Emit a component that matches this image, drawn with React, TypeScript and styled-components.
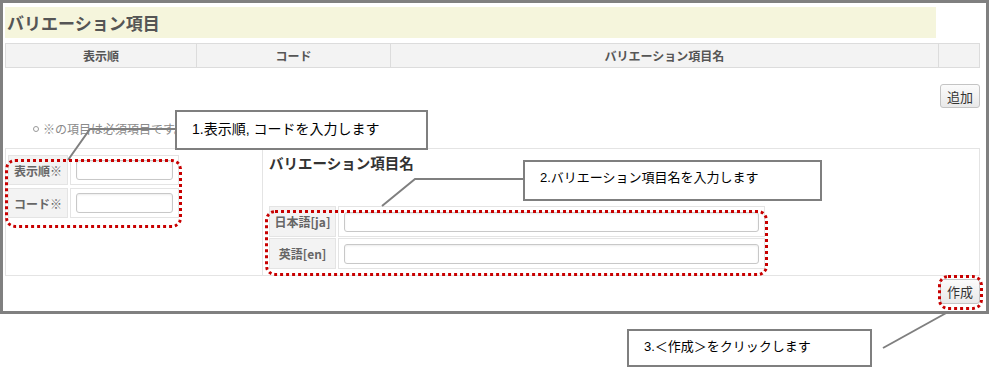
import styled, { createGlobalStyle } from 'styled-components';

const GlobalStyle = createGlobalStyle`
    html, body {
        margin: 0;
        padding: 0;
        background: #fff;
    }
    body {
        font-family: "Noto Sans CJK JP", "Noto Sans", sans-serif;
    }
`;

// 画面全体（注釈はこの上に重ねる）
const Page = styled.div`
    position: relative;
    width: 991px;
    height: 367px;
    overflow: hidden;
`;

const Frame = styled.div`
    width: 989px;
    height: 314px;
    border: 3px solid #808080;
    box-sizing: border-box;
    padding: 4px 6px 0 2px;
    display: flex;
    flex-direction: column;
`;

const TitleBar = styled.div`
    height: 31px;
    margin-right: 44px;
    background: #f5f5dc;
    padding-left: 2px;
    font-size: 17px;
    font-weight: bold;
    line-height: 31px;
    color: #555;
`;

const HeaderRow = styled.div`
    margin-top: 5px;
    display: grid;
    grid-template-columns: 191px 194px 548px 42px;
    height: 25px;
    border-top: 1px solid #dcdcdc;
    border-bottom: 1px solid #dcdcdc;
    box-sizing: border-box;
    background: #f3f3f3;
`;

const HeaderCell = styled.div`
    display: flex;
    align-items: center;
    justify-content: center;
    font-size: 12px;
    font-weight: bold;
    color: #555;
    border-left: 1px solid #dcdcdc;
    &:last-child {
        border-right: 1px solid #dcdcdc;
    }
`;

const ButtonRow = styled.div<{ $top: number }>`
    display: flex;
    justify-content: flex-end;
    margin-top: ${({ $top }) => $top}px;
`;

const Button = styled.button<{ $h: number }>`
    width: 40px;
    height: ${({ $h }) => $h}px;
    padding: 0;
    border: 1px solid #c4c4c4;
    border-radius: 3px;
    background: linear-gradient(#fbfbfb, #e9e9e9);
    font-family: inherit;
    font-size: 13px;
    color: #333;
`;

const Note = styled.div`
    margin-top: 11px;
    height: 20px;
    line-height: 20px;
    padding-left: 38px;
    position: relative;
    font-size: 12px;
    color: #8a8a8a;
    &::before {
        content: '';
        position: absolute;
        left: 28px;
        top: 7px;
        width: 4px;
        height: 4px;
        border: 1px solid #999;
        border-radius: 50%;
    }
`;

const FormPanel = styled.div`
    margin-top: 9px;
    height: 128px;
    box-sizing: border-box;
    border: 1px solid #e4e4e4;
    display: grid;
    grid-template-columns: 256px 1fr;
`;

const LeftPane = styled.div`
    padding: 6px 0 0 2px;
`;

const RightPane = styled.div`
    border-left: 1px solid #e4e4e4;
    padding: 4px 0 0 6px;
`;

const PaneTitle = styled.div`
    font-size: 14.5px;
    font-weight: bold;
    line-height: 20px;
    color: #333;
    margin-bottom: 33px;
`;

const FieldTable = styled.div<{ $label: number; $input: number; $row: number; $gap: number }>`
    display: grid;
    grid-template-columns: ${({ $label, $input }) => `${$label}px ${$input}px`};
    grid-auto-rows: ${({ $row }) => $row}px;
    column-gap: 2px;
    row-gap: ${({ $gap }) => $gap}px;
`;

const LabelCell = styled.div`
    display: flex;
    align-items: center;
    justify-content: center;
    background: #f3f3f3;
    border: 1px solid #e4e4e4;
    font-size: 12px;
    font-weight: bold;
    color: #666;
`;

const InputCell = styled.div`
    display: flex;
    align-items: center;
    border: 1px solid #e4e4e4;
    padding: 0 5px;
`;

const TextInput = styled.input`
    width: 100%;
    height: 20px;
    box-sizing: border-box;
    border: 1px solid #c8c8c8;
    border-radius: 3px;
    box-shadow: inset 0 1px 2px rgba(0, 0, 0, 0.08);
    outline: none;
`;

// 注釈
const Overlay = styled.svg`
    position: absolute;
    left: 0;
    top: 0;
    pointer-events: none;
`;

const Marker = styled.div<{ $x: number; $y: number; $w: number; $h: number }>`
    position: absolute;
    left: ${({ $x }) => $x}px;
    top: ${({ $y }) => $y}px;
    width: ${({ $w }) => $w}px;
    height: ${({ $h }) => $h}px;
    box-sizing: border-box;
    border: 3px dotted #c80000;
    border-radius: 10px;
    pointer-events: none;
`;

const Callout = styled.div<{ $x: number; $y: number; $w: number; $h: number; $pt: number; $fs: number }>`
    position: absolute;
    left: ${({ $x }) => $x}px;
    top: ${({ $y }) => $y}px;
    width: ${({ $w }) => $w}px;
    height: ${({ $h }) => $h}px;
    box-sizing: border-box;
    border: 2px solid #7f7f7f;
    background: #fff;
    padding: ${({ $pt }) => $pt}px 0 0 15px;
    font-family: "Liberation Sans", "Noto Sans CJK JP", sans-serif;
    font-size: ${({ $fs }) => $fs}px;
    line-height: 20px;
    color: #000;
    white-space: nowrap;
`;

export default function App() {
    return (
        <Page>
            <GlobalStyle />
            <Frame>
                <TitleBar>バリエーション項目</TitleBar>
                <HeaderRow>
                    <HeaderCell>表示順</HeaderCell>
                    <HeaderCell>コード</HeaderCell>
                    <HeaderCell>バリエーション項目名</HeaderCell>
                    <HeaderCell />
                </HeaderRow>
                <ButtonRow $top={16}>
                    <Button $h={24}>追加</Button>
                </ButtonRow>
                <Note>※の項目は必須項目です。</Note>
                <FormPanel>
                    <LeftPane>
                        <FieldTable $label={60} $input={109} $row={30} $gap={3}>
                            <LabelCell>表示順※</LabelCell>
                            <InputCell><TextInput /></InputCell>
                            <LabelCell>コード※</LabelCell>
                            <InputCell><TextInput /></InputCell>
                        </FieldTable>
                    </LeftPane>
                    <RightPane>
                        <PaneTitle>バリエーション項目名</PaneTitle>
                        <FieldTable $label={67} $input={427} $row={31} $gap={1}>
                            <LabelCell>日本語[ja]</LabelCell>
                            <InputCell><TextInput /></InputCell>
                            <LabelCell>英語[en]</LabelCell>
                            <InputCell><TextInput /></InputCell>
                        </FieldTable>
                    </RightPane>
                </FormPanel>
                <ButtonRow $top={3}>
                    <Button $h={25}>作成</Button>
                </ButtonRow>
            </Frame>

            <Overlay width={991} height={367}>
                <polyline points="175,129 90,129 68,160" fill="none" stroke="#7f7f7f" strokeWidth={2} />
                <polyline points="523,179 415,179 382,206" fill="none" stroke="#7f7f7f" strokeWidth={2} />
                <line x1={883} y1={348} x2={948} y2={312} stroke="#7f7f7f" strokeWidth={2} />
            </Overlay>

            <Marker $x={5} $y={159} $w={177} $h={69} />
            <Marker $x={265} $y={210} $w={503} $h={66} />
            <Marker $x={938} $y={275} $w={45} $h={35} />

            <Callout $x={175} $y={110} $w={253} $h={40} $pt={7} $fs={14}>1.表示順, コードを入力します</Callout>
            <Callout $x={523} $y={160} $w={299} $h={41} $pt={6} $fs={13}>2.バリエーション項目名を入力します</Callout>
            <Callout $x={627} $y={329} $w={245} $h={38} $pt={6} $fs={13}>3.＜作成＞をクリックします</Callout>
        </Page>
    );
}
